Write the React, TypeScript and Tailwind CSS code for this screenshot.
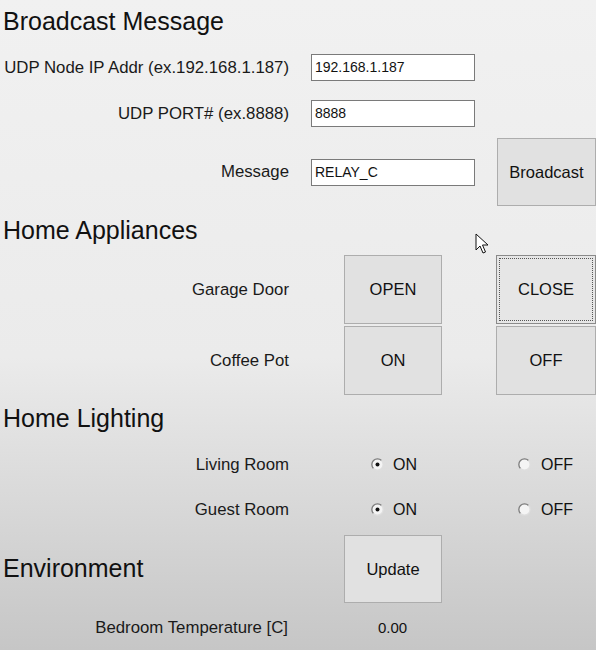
import React from 'react'

const font = { fontFamily: '"Liberation Sans", Arial, sans-serif' }

function Heading({ children, h }: { children: React.ReactNode; h: string }) {
  return (
    <div className={`flex items-center pl-[3px] text-[25px] text-[#111] ${h}`}>{children}</div>
  )
}

function Label({ children }: { children: React.ReactNode }) {
  return <div className="w-[290px] shrink-0 pr-[1px] text-right text-[16.8px] text-[#1a1a1a]">{children}</div>
}

function TextBox({ value }: { value: string }) {
  return (
    <div className="ml-[21px] flex h-[27px] w-[164px] items-center border border-[#7a7a7a] bg-white pl-[3px] text-[14px] text-[#111]">
      {value}
    </div>
  )
}

function Btn({ children, w, focused, className = '' }: { children: React.ReactNode; w: string; focused?: boolean; className?: string }) {
  return (
    <div
      className={`flex h-full items-center justify-center border text-[16.5px] text-[#111] ${w} ${
        focused ? 'border-[#8a8a8a] bg-[#e6e6e6] p-[2px]' : 'border-[#adadad] bg-[#e1e1e1]'
      } ${className}`}
    >
      {focused ? (
        <div className="flex h-full w-full items-center justify-center border border-dotted border-[#555]">{children}</div>
      ) : (
        children
      )}
    </div>
  )
}

function Radio({ checked }: { checked?: boolean }) {
  return (
    <svg width="13" height="13" viewBox="0 0 13 13">
      <circle cx="6.5" cy="6.5" r="5.6" fill="#f4f4f4" />
      <path d="M10.5 2.5 A5.6 5.6 0 1 0 2.5 10.5" fill="none" stroke="#7c7c7c" strokeWidth="1.3" />
      <path d="M2.5 10.5 A5.6 5.6 0 0 0 10.5 2.5" fill="none" stroke="#dedede" strokeWidth="1.3" />
      {checked && <circle cx="6.5" cy="6.5" r="2" fill="#111" />}
    </svg>
  )
}

function LightRow({ label, h }: { label: string; h: string }) {
  return (
    <div className={`flex items-center ${h}`}>
      <Label>{label}</Label>
      <div className="ml-[81px] flex items-center gap-[9px]">
        <Radio checked />
        <span className="text-[16px] text-[#111]">ON</span>
      </div>
      <div className="ml-[101px] flex items-center gap-[10px]">
        <Radio />
        <span className="text-[16px] text-[#111]">OFF</span>
      </div>
    </div>
  )
}

export default function App() {
  return (
    <div
      className="relative h-[650px] w-[596px] overflow-hidden bg-linear-to-b from-[#f1f1f1] via-[#ebebeb] via-55% to-[#c6c6c6]"
      style={font}
    >
      <Heading h="h-[44px]">Broadcast Message</Heading>

      <div className="mt-[10px] flex h-[27px] items-center">
        <Label>UDP Node IP Addr (ex.192.168.1.187)</Label>
        <TextBox value="192.168.1.187" />
      </div>

      <div className="mt-[19px] flex h-[27px] items-center">
        <Label>UDP PORT# (ex.8888)</Label>
        <TextBox value="8888" />
      </div>

      <div className="mt-[11px] flex h-[68px] items-center">
        <Label>Message</Label>
        <TextBox value="RELAY_C" />
        <div className="ml-[22px] h-full">
          <Btn w="w-[99px]">Broadcast</Btn>
        </div>
      </div>

      <Heading h="h-[49px]">Home Appliances</Heading>

      <div className="flex h-[69px] items-center">
        <Label>Garage Door</Label>
        <div className="ml-[54px] flex h-full">
          <Btn w="w-[98px]">OPEN</Btn>
          <Btn w="w-[100px]" focused className="ml-[54px]">CLOSE</Btn>
        </div>
      </div>

      <div className="mt-[2px] flex h-[69px] items-center">
        <Label>Coffee Pot</Label>
        <div className="ml-[54px] flex h-full">
          <Btn w="w-[98px]">ON</Btn>
          <Btn w="w-[100px]" className="ml-[54px]">OFF</Btn>
        </div>
      </div>

      <Heading h="h-[47px]">Home Lighting</Heading>

      <LightRow label="Living Room" h="h-[45px]" />
      <LightRow label="Guest Room" h="h-[45px]" />

      <div className="mt-[3px] flex h-[68px] items-center">
        <div className="w-[344px] shrink-0 pl-[3px] text-[25px] text-[#111]">Environment</div>
        <Btn w="w-[98px]">Update</Btn>
      </div>

      <div className="flex h-[50px] items-center">
        <div className="w-[288px] shrink-0 text-right text-[16.8px] text-[#1a1a1a]">Bedroom Temperature [C]</div>
        <span className="ml-[90px] text-[15px] text-[#111]">0.00</span>
      </div>

      <svg className="absolute left-[475px] top-[233px]" width="14" height="22" viewBox="0 0 14 22">
        <path d="M1 1 L1 17 L5 13 L8 20 L10.5 19 L7.5 12 L13 12 Z" fill="#fff" stroke="#111" strokeWidth="1" strokeLinejoin="round" />
      </svg>
    </div>
  )
}
